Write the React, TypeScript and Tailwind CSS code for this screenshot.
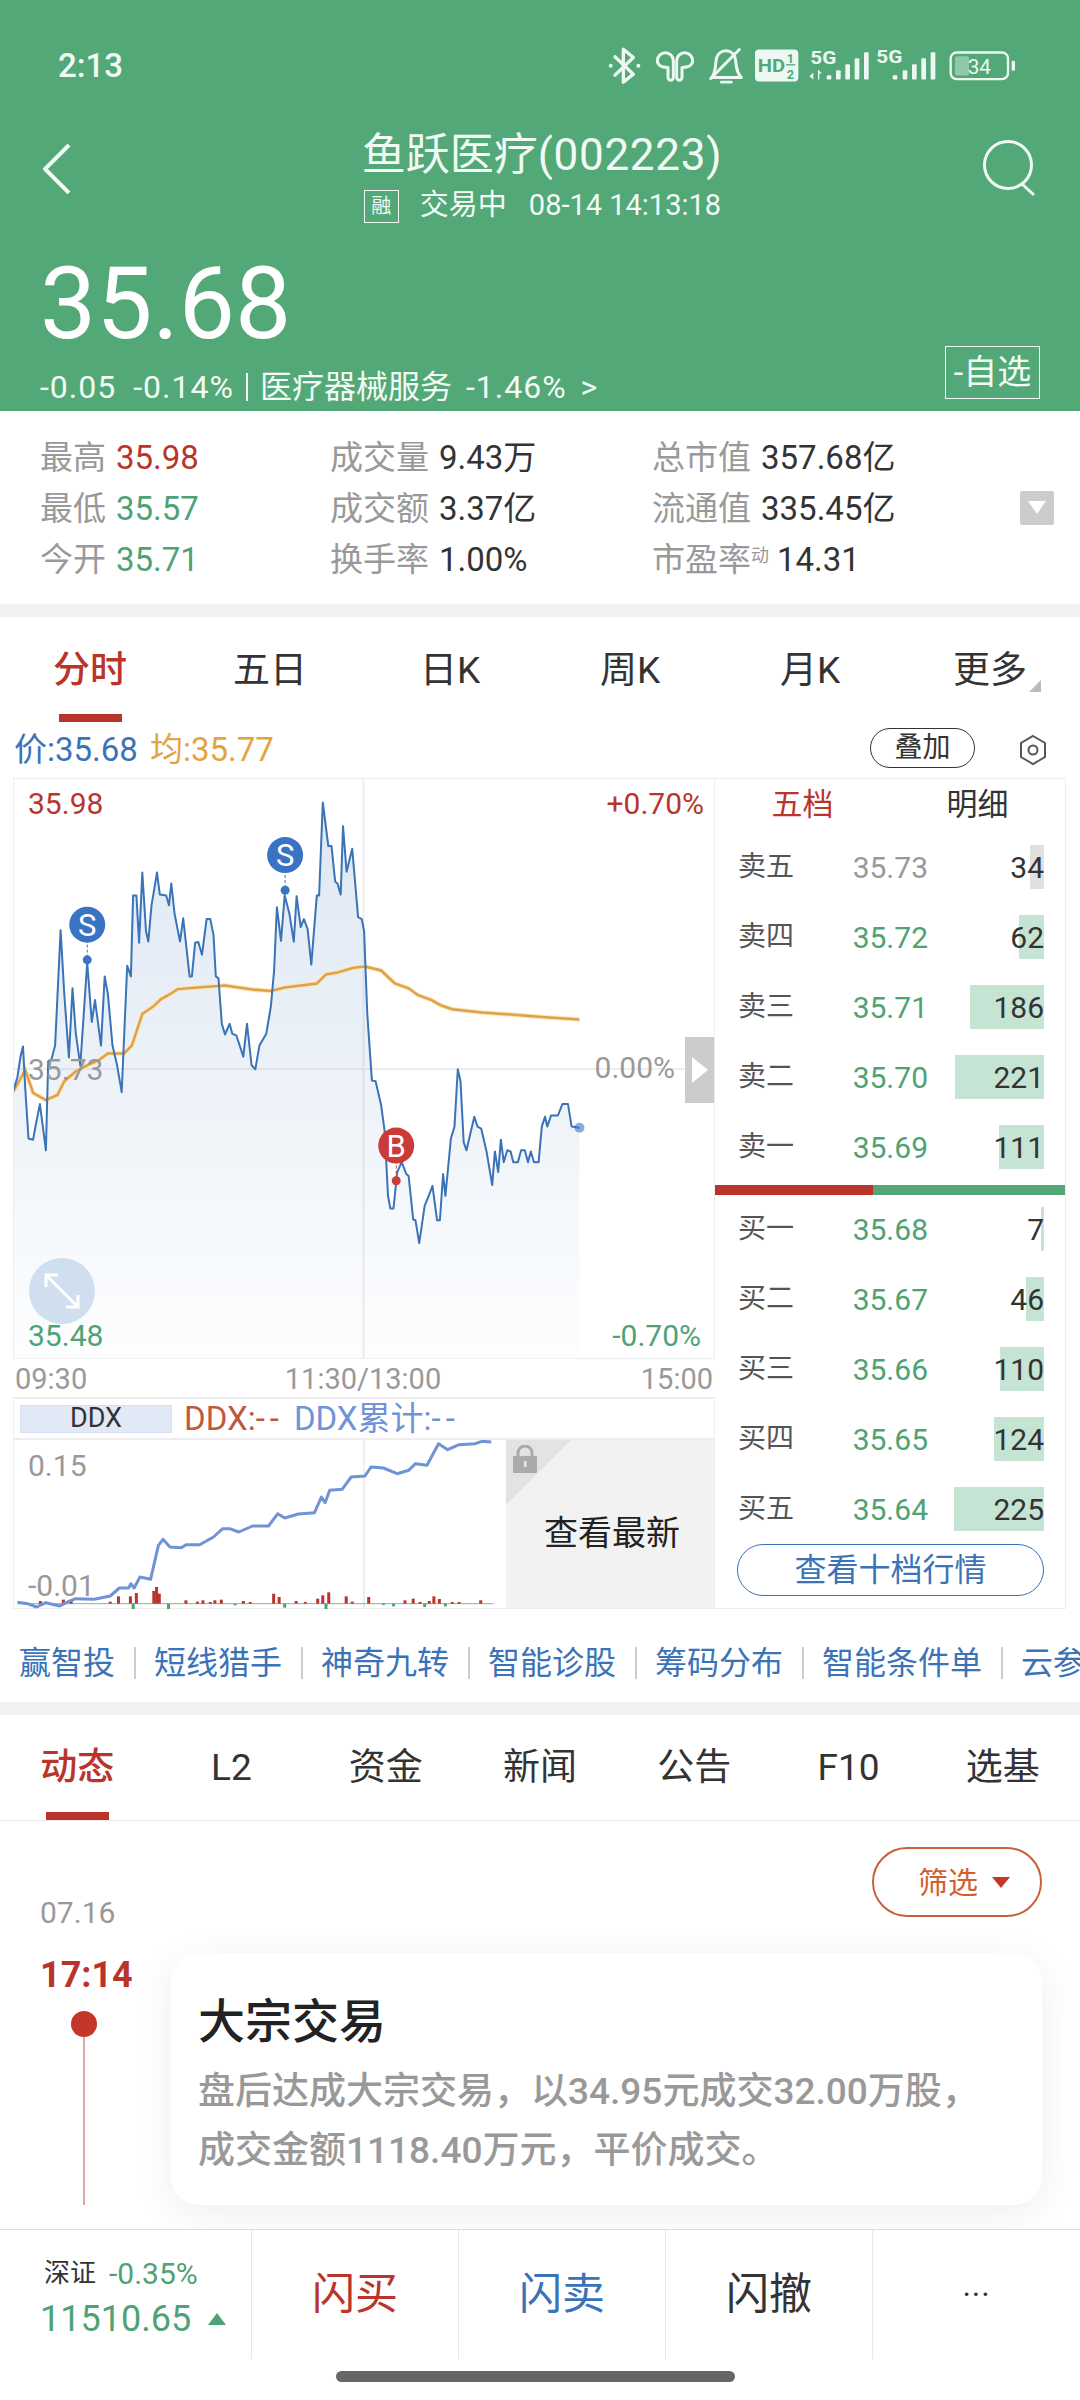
import React from 'react';

const GREEN = 'text-[#4fa274]';

// traced from the chart, in crop coordinates (sx, sy below bring them to pixels)
const pricePts = [[28,838],[38,800],[45,745],[50,722],[55,830],[62,955],[72,958],[78,920],[87,868],[100,985],[105,760],[112,755],[120,720],[132,428],[140,590],[150,750],[158,575],[165,690],[175,770],[190,510],[200,660],[207,605],[220,720],[228,545],[235,590],[245,720],[255,770],[265,838],[277,518],[285,545],[290,340],[297,340],[303,460],[310,282],[318,430],[323,457],[330,365],[342,282],[348,338],[362,340],[368,365],[373,310],[380,385],[392,457],[399,398],[413,545],[418,545],[425,460],[432,458],[440,490],[450,400],[458,400],[465,440],[470,545],[476,550],[483,665],[490,692],[500,665],[506,690],[515,695],[530,748],[538,665],[548,770],[556,780],[565,720],[580,690],[590,620],[597,530],[603,370],[612,455],[620,340],[630,385],[640,457],[646,342],[655,420],[662,400],[670,425],[678,515],[690,340],[695,340],[703,105],[715,215],[722,215],[730,305],[735,310],[742,338],[747,165],[755,280],[767,222],[780,395],[788,400],[793,430],[800,640],[810,808],[818,810],[830,870],[838,940],[845,1100],[850,1132],[857,1132],[865,1040],[875,1015],[885,1045],[890,1050],[900,1160],[905,1162],[913,1220],[925,1125],[932,1105],[942,1075],[952,1162],[958,1162],[965,1045],[970,1100],[982,955],[990,925],[997,780],[1003,810],[1010,965],[1016,985],[1033,900],[1040,925],[1048,930],[1060,990],[1072,1073],[1078,988],[1085,1040],[1091,958],[1097,1015],[1105,985],[1112,988],[1118,1015],[1128,1015],[1135,985],[1143,985],[1150,1015],[1156,988],[1163,1015],[1173,1015],[1180,925],[1187,900],[1192,925],[1200,897],[1215,897],[1225,868],[1237,868],[1245,925],[1262,928]];
const avgPts = [[28,838],[55,782],[72,840],[100,858],[125,845],[140,810],[165,785],[190,770],[215,757],[235,740],[270,740],[287,720],[310,640],[335,620],[350,603],[370,590],[387,577],[430,573],[490,568],[550,578],[590,582],[620,573],[690,563],[710,540],[735,535],[770,523],[795,520],[830,530],[860,563],[890,575],[910,592],[940,605],[960,618],[985,628],[1050,636],[1120,642],[1180,648],[1262,654]];
const ddxPts = [[38,661],[60,665],[80,675],[100,662],[130,672],[150,658],[165,650],[205,652],[240,642],[260,618],[280,618],[285,605],[292,618],[305,585],[328,592],[345,490],[355,472],[370,495],[395,497],[405,488],[435,488],[465,465],[485,440],[500,440],[520,450],[550,432],[585,432],[605,395],[620,408],[650,396],[685,392],[700,345],[708,362],[718,325],[745,322],[765,285],[795,282],[808,255],[835,258],[865,275],[890,265],[905,245],[930,250],[955,185],[975,203],[1000,188],[1035,185],[1050,178],[1070,180]];
const redBars = [[88,8],[138,12],[155,10],[240,6],[258,22],[284,22],[297,32],[335,38],[341,50],[347,30],[405,10],[430,6],[442,10],[458,5],[468,10],[482,12],[530,8],[545,5],[596,30],[608,20],[645,8],[665,5],[692,15],[703,25],[716,34],[754,22],[767,6],[803,20],[882,10],[900,15],[915,5],[935,8],[945,22],[957,14],[985,5],[1000,5],[1047,10]];
const greenBars = [[290,20],[367,20],[512,5],[620,12],[710,20],[835,4],[857,8],[925,10],[970,8]];

const sx = (x: number) => x / 2.178 - 14;
const sy = (y: number) => y / 2.53 - 18;
const line = (pts: number[][]) => pts.map(([x, y]) => `${sx(x).toFixed(1)},${sy(y).toFixed(1)}`).join(' ');
const ddxY = (y: number) => y / 3 - 58;
const ddxLine = ddxPts.map(([x, y]) => `${sx(x).toFixed(1)},${ddxY(y).toFixed(1)}`).join(' ');

const stats = [
  [['最高', '35.98', 'text-[#b9352c]'], ['成交量', '9.43万', ''], ['总市值', '357.68亿', '']],
  [['最低', '35.57', GREEN], ['成交额', '3.37亿', ''], ['流通值', '335.45亿', '']],
  [['今开', '35.71', GREEN], ['换手率', '1.00%', ''], ['市盈率', '14.31', '']],
];

const sells = [
  ['卖五', '35.73', '34', 14, 'gray'],
  ['卖四', '35.72', '62', 25, 'green'],
  ['卖三', '35.71', '186', 74, 'green'],
  ['卖二', '35.70', '221', 89, 'green'],
  ['卖一', '35.69', '111', 45, 'green'],
] as const;
const buys = [
  ['买一', '35.68', '7', 3, 'green'],
  ['买二', '35.67', '46', 18, 'green'],
  ['买三', '35.66', '110', 44, 'green'],
  ['买四', '35.65', '124', 50, 'green'],
  ['买五', '35.64', '225', 90, 'green'],
] as const;

function BookRow({ row }: { row: readonly [string, string, string, number, string] }) {
  const [label, price, qty, w, tone] = row;
  return (
    <div className="flex h-[44px] items-center pl-[23px] pr-[21px]">
      <span className="w-[101px] text-[28px] text-[#555]">{label}</span>
      <span className={`w-[89px] text-right text-[30px] ${tone === 'gray' ? 'text-[#999]' : GREEN}`}>{price}</span>
      <div className="relative flex h-full flex-1 items-center justify-end">
        <div
          className={`absolute inset-y-0 right-0 ${tone === 'gray' ? 'bg-[#e0e0e0]' : 'bg-[#c5e4d3]'}`}
          style={{ width: w }}
        />
        <span className="relative text-[30px] text-[#333]">{qty}</span>
      </div>
    </div>
  );
}

function StatusIcons() {
  return (
    <svg width="480" height="57" viewBox="0 60 1440 170" fill="none" stroke="#eef8f2" strokeLinecap="round" strokeLinejoin="round">
      <path d="M105 110 L160 162 L130 186 L130 87 L160 112 L105 165" strokeWidth="10" />
      <circle cx="92" cy="137" r="6" fill="#eef8f2" stroke="none" />
      <circle cx="175" cy="137" r="6" fill="#eef8f2" stroke="none" />
      <path d="M232 122 a24 24 0 0 1 48 0 v50 a8 8 0 0 1 -16 0 v-30 c-15 0 -32 -5 -32 -20" strokeWidth="9" />
      <path d="M338 122 a24 24 0 0 0 -48 0 v50 a8 8 0 0 0 16 0 v-30 c15 0 32 -5 32 -20" strokeWidth="9" />
      <path d="M396 172 h88 c-13 -13 -15 -30 -17 -50 c-2 -20 -14 -30 -29 -30 c-15 0 -28 10 -30 30 c-2 20 -2 35 -12 50" strokeWidth="9" />
      <path d="M392 175 L478 88" strokeWidth="9" />
      <path d="M424 186 h30" strokeWidth="8" />
      <rect x="525" y="88" width="130" height="96" rx="12" fill="#eef8f2" stroke="none" />
      <g fill="#53a878" stroke="none" fontFamily="Roboto, sans-serif" fontWeight="700">
        <text x="533" y="155" fontSize="54" textLength="82" lengthAdjust="spacingAndGlyphs">HD</text>
        <text x="620" y="128" fontSize="38">1</text>
        <text x="620" y="178" fontSize="38">2</text>
        <rect x="618" y="132" width="28" height="4" />
      </g>
      <g fill="#eef8f2" stroke="none" fontFamily="Roboto, sans-serif" fontWeight="700">
        <text x="691" y="132" fontSize="56" textLength="78" lengthAdjust="spacingAndGlyphs">5G</text>
        <text x="889" y="130" fontSize="56" textLength="78" lengthAdjust="spacingAndGlyphs">5G</text>
        <path d="M688 168 l12 -10 v20 z M714 148 l12 12 h-8 v18 h-4 z" />
        <rect x="740" y="165" width="14" height="13" rx="3" />
        <rect x="768" y="150" width="14" height="28" rx="3" />
        <rect x="796" y="132" width="14" height="46" rx="3" />
        <rect x="824" y="114" width="14" height="64" rx="3" />
        <rect x="852" y="96" width="14" height="82" rx="3" />
        <rect x="938" y="165" width="14" height="13" rx="3" />
        <rect x="968" y="150" width="14" height="28" rx="3" />
        <rect x="996" y="132" width="14" height="46" rx="3" />
        <rect x="1024" y="114" width="14" height="64" rx="3" />
        <rect x="1052" y="96" width="14" height="82" rx="3" />
      </g>
      <rect x="1112" y="97" width="172" height="80" rx="18" strokeWidth="7" />
      <rect x="1125" y="108" width="42" height="58" rx="6" fill="#eef8f2" fillOpacity="0.4" stroke="none" />
      <text x="1198" y="161" textAnchor="middle" fontSize="62" fill="#eef8f2" stroke="none" fontFamily="Roboto, sans-serif">34</text>
      <rect x="1295" y="122" width="10" height="30" rx="4" fill="#eef8f2" stroke="none" />
    </svg>
  );
}

function PriceChart() {
  const fillPts = `${line(pricePts)} ${sx(1262).toFixed(1)},${sy(1515).toFixed(1)} ${sx(28).toFixed(1)},${sy(1515).toFixed(1)}`;
  return (
    <div className="relative h-[581px] border border-[#eeeeee]">
      <svg className="absolute left-0 top-0" width="700" height="579" fill="none">
        <defs>
          <linearGradient id="area" x1="0" y1="0" x2="0" y2="1">
            <stop offset="0" stopColor="#3a73b8" stopOpacity="0.17" />
            <stop offset="1" stopColor="#3a73b8" stopOpacity="0.01" />
          </linearGradient>
        </defs>
        <path d="M0 290 H700" stroke="#dddddd" strokeWidth="1" />
        <path d="M349.5 0 V579" stroke="#eeeeee" strokeWidth="2" />
        <polygon points={fillPts} fill="url(#area)" />
        <polyline points={line(avgPts)} stroke="#fbe6b8" strokeWidth="4.5" />
        <polyline points={line(avgPts)} stroke="#dfa24a" strokeWidth="2.5" />
        <polyline points={line(pricePts)} stroke="#3a73b8" strokeWidth="2" strokeLinejoin="round" />
        <circle cx={sx(1262)} cy={sy(928)} r="5" fill="#3a73c4" fillOpacity="0.6" />
        {[
          { x: 190, y: 414, d: 503, c: '#3a73c4', t: 'S' },
          { x: 621, y: 238, d: 327, c: '#3a73c4', t: 'S' },
          { x: 863, y: 973, d: 1062, c: '#cb3a36', t: 'B' },
        ].map(m => (
          <g key={m.x}>
            <path d={`M${sx(m.x)} ${sy(m.y)} V${sy(m.d)}`} stroke={m.c} strokeWidth="1" strokeDasharray="3 2" />
            <circle cx={sx(m.x)} cy={sy(m.d)} r="4.5" fill={m.c} />
            <circle cx={sx(m.x)} cy={sy(m.y)} r="18" fill={m.c} />
            <text x={sx(m.x)} y={sy(m.y) + 11} textAnchor="middle" fontSize="31" fill="#fff" fontFamily="Roboto, sans-serif">{m.t}</text>
          </g>
        ))}
      </svg>
      <span className="absolute left-[14px] top-[7px] text-[30px] leading-[36px] text-[#b9352c]">35.98</span>
      <span className="absolute right-[10px] top-[7px] text-[30px] leading-[36px] text-[#b9352c]">+0.70%</span>
      <span className="absolute left-[14px] top-[273px] text-[30px] leading-[36px] text-[#999]">35.73</span>
      <span className="absolute right-[39px] top-[271px] text-[30px] leading-[36px] text-[#999]">0.00%</span>
      <span className="absolute left-[14px] bottom-[4px] text-[30px] leading-[36px] text-[#4fa274]">35.48</span>
      <span className="absolute right-[13px] bottom-[4px] text-[30px] leading-[36px] text-[#4fa274]">-0.70%</span>
      <div className="absolute right-0 top-[258px] flex h-[66px] w-[29px] items-center justify-center bg-[#cccccc]">
        <div className="h-0 w-0 border-y-[13px] border-l-[16px] border-y-transparent border-l-white" />
      </div>
      <div className="absolute left-[15px] top-[479px] flex h-[66px] w-[66px] items-center justify-center rounded-full bg-[#cfdff0]">
        <svg width="40" height="40" viewBox="0 0 40 40" fill="none" stroke="#fff" strokeWidth="3">
          <path d="M4 16 V4 H16 M4 4 L36 36 M24 36 H36 V24" />
        </svg>
      </div>
    </div>
  );
}

function DdxChart() {
  return (
    <div className="flex h-[171px] border-x border-b border-t-2 border-[#eeeeee]">
      <div className="relative w-[492px]">
        <svg className="absolute left-0 top-0" width="492" height="169" fill="none">
          <path d="M350 0 V169" stroke="#eeeeee" strokeWidth="2" />
          <path d={`M${sx(38)} ${ddxY(665)} H${sx(1075)}`} stroke="#7dbb98" strokeWidth="1" />
          {redBars.map(([x, h]) => (
            <rect key={x} x={sx(x) - 1.5} y={ddxY(665) - h / 3} width="3" height={h / 3} fill="#b9352c" />
          ))}
          {greenBars.map(([x, h]) => (
            <rect key={x} x={sx(x) - 1.5} y={ddxY(665)} width="3" height={h / 3} fill="#4fa274" />
          ))}
          <polyline points={ddxLine} stroke="#6f93d6" strokeWidth="3" strokeLinejoin="round" />
        </svg>
        <span className="absolute left-[14px] top-[8px] text-[30px] leading-[36px] text-[#999]">0.15</span>
        <span className="absolute left-[14px] top-[128px] text-[30px] leading-[36px] text-[#999]">-0.01</span>
      </div>
      <div className="relative flex flex-1 items-center justify-center bg-[#f2f2f2] pl-[4px] pt-[18px]">
        <div className="absolute left-0 top-0 h-[65px] w-[65px] bg-[#e3e3e3] [clip-path:polygon(0_0,100%_0,0_100%)]" />
        <svg className="absolute left-[6px] top-[5px]" width="26" height="28" viewBox="0 0 26 28">
          <path d="M6 12 V8 a7 7 0 0 1 14 0 v4" fill="none" stroke="#aaaaaa" strokeWidth="3" />
          <rect x="1" y="11" width="24" height="17" rx="1" fill="#aaaaaa" />
          <rect x="12" y="16" width="2.5" height="6" fill="#e8e8e8" />
        </svg>
        <span className="relative text-[34px] text-[#222]">查看最新</span>
      </div>
    </div>
  );
}

export default function App() {
  return (
    <div className="h-[2400px] w-[1080px] overflow-hidden bg-white font-['Roboto','Noto_Sans_CJK_SC',sans-serif] text-[#333]">
      {/* green quote header */}
      <header className="h-[411px] bg-[#53a878] text-[#f2faf5]">
        <div className="flex h-[97px] items-end justify-between">
          <span className="mb-[11px] ml-[58px] text-[33px] font-medium leading-[40px]">2:13</span>
          <div className="mr-[20px]"><StatusIcons /></div>
        </div>
        <div className="mt-[30px] grid h-[100px] grid-cols-[1fr_auto_1fr]">
          <div className="pl-[43px] pt-[17px]">
            <svg width="28" height="50" viewBox="0 0 28 50" fill="none" stroke="#f2faf5" strokeWidth="4">
              <path d="M26 1 L2 25 L26 49" />
            </svg>
          </div>
          <div className="flex flex-col items-start pl-[4px]">
            <div className="text-[44px] leading-[56px]">鱼跃医疗<span className="tracking-[0.7px]">(002223)</span></div>
            <div className="ml-[2px] mt-[6px] flex h-[34px] items-center">
              <span className="flex h-[33px] w-[35px] items-center justify-center border border-[#f2faf5] text-[20px]">融</span>
              <span className="ml-[21px] text-[29px]">交易中</span>
              <span className="ml-[22px] text-[29px]">08-14 14:13:18</span>
            </div>
          </div>
          <div className="flex justify-end pr-[44px] pt-[12px]">
            <svg width="54" height="58" viewBox="0 0 54 58" fill="none" stroke="#f2faf5" strokeWidth="3">
              <circle cx="26" cy="26" r="23.5" />
              <path d="M40 45 L52 56" />
            </svg>
          </div>
        </div>
        <div className="flex items-end justify-between pl-[40px] pr-[40px]">
          <div>
            <div className="pt-[27px] text-[100px] leading-[100px] text-white">35.68</div>
            <div className="mt-[15px] flex h-[36px] items-center text-[32px] leading-[36px]">
              <span className="tracking-[1px]">-0.05</span>
              <span className="ml-[17px] tracking-[1px]">-0.14%</span>
              <span className="ml-[12px] h-[28px] w-[2px] bg-[#f2faf5]" />
              <span className="ml-[12px]">医疗器械服务</span>
              <span className="ml-[14px] tracking-[1px]">-1.46%</span>
              <span className="ml-[14px]">&gt;</span>
            </div>
          </div>
          <div className="mb-[6px] flex h-[53px] w-[95px] items-center justify-center border border-[#f2faf5] text-[34px]">-自选</div>
        </div>
      </header>

      {/* stats */}
      <section className="flex h-[193px] items-center pl-[40px]">
        <div className="flex-1 pt-[3px]">
          {stats.map((row, i) => (
            <div key={i} className="grid h-[51px] grid-cols-[290px_322px_1fr] items-center text-[33px]">
              {row.map(([label, val, tone]) => (
                <div key={label} className="whitespace-nowrap">
                  <span className="text-[#999]">{label}</span>
                  {label === '市盈率' && <sup className="text-[18px] text-[#999]">动</sup>}
                  <span className={`${label === '市盈率' ? 'ml-[8px]' : 'ml-[10px]'} ${tone || 'text-[#333]'}`}>{val}</span>
                </div>
              ))}
            </div>
          ))}
        </div>
        <div className="mr-[26px] flex h-[34px] w-[34px] items-center justify-center rounded-[2px] bg-[#cccccc]">
          <div className="h-0 w-0 border-x-[9px] border-t-[13px] border-x-transparent border-t-white" />
        </div>
      </section>
      <div className="h-[13px] bg-[#f2f2f2]" />

      {/* chart tabs */}
      <nav className="grid h-[105px] grid-cols-6 text-[37px]">
        {['分时', '五日', '日K', '周K', '月K', '更多'].map((t, i) => (
          <div key={t} className="flex flex-col items-center pt-[29px]">
            <div className={`relative leading-[50px] ${i === 0 ? 'font-medium text-[#b9352c]' : 'text-[#333]'}`}>
              {t}
              {i === 5 && <div className="absolute bottom-[4px] right-[-14px] h-[12px] w-[12px] bg-[#bbbbbb] [clip-path:polygon(100%_0,100%_100%,0_100%)]" />}
            </div>
            {i === 0 && <div className="mt-[18px] h-[8px] w-[63px] bg-[#b9352c]" />}
          </div>
        ))}
      </nav>
      <div className="flex h-[56px] items-center pl-[14px] pr-[32px] text-[33px]">
        <span className="text-[#3a73b8]">价:35.68</span>
        <span className="ml-[12px] text-[#e3a440]">均:35.77</span>
        <span className="mb-[4px] ml-auto flex h-[40px] w-[105px] items-center justify-center rounded-full border border-[#333] text-[28px]">叠加</span>
        <svg className="ml-[43px]" width="30" height="32" viewBox="0 0 30 32" fill="none" stroke="#555" strokeWidth="2">
          <path d="M15 2 L27 9 V23 L15 30 L3 23 V9 Z" />
          <circle cx="15" cy="16" r="4.5" />
        </svg>
      </div>

      {/* chart and order book */}
      <section className="ml-[13px] mr-[14px] flex h-[831px]">
        <div className="w-[702px]">
          <PriceChart />
          <div className="flex h-[38px] items-center justify-between px-[2px] pt-[3px] text-[29px] text-[#999]">
            <span>09:30</span>
            <span className="ml-[-2px]">11:30/13:00</span>
            <span>15:00</span>
          </div>
          <div className="flex h-[41px] items-center border-x border-t-2 border-[#eeeeee] pl-[6px] text-[33px]">
            <span className="flex h-[28px] w-[152px] items-center justify-center border border-[#d5e0f4] bg-[#e2e9f6] text-[27px] text-[#333]">DDX</span>
            <span className="ml-[12px] text-[#c0583f]">DDX:<span className="tracking-[5px]">--</span></span>
            <span className="ml-[10px] text-[#6f93d6]">DDX累计:<span className="tracking-[5px]">--</span></span>
          </div>
          <DdxChart />
        </div>
        <div className="flex-1 border-x border-y border-[#eeeeee] border-l-0">
          <div className="grid h-[52px] grid-cols-2 items-center text-center text-[31px]">
            <span className="text-[#b9352c]">五档</span>
            <span className="text-[#333]">明细</span>
          </div>
          <div className="mt-[14px] flex flex-col gap-[26px]">
            {sells.map(r => <BookRow key={r[0]} row={r} />)}
          </div>
          <div className="mt-[16px] flex h-[10px]">
            <div className="w-[158px] bg-[#b9352c]" />
            <div className="flex-1 bg-[#53a878]" />
          </div>
          <div className="mt-[12px] flex flex-col gap-[26px]">
            {buys.map(r => <BookRow key={r[0]} row={r} />)}
          </div>
          <div className="ml-[22px] mr-[21px] mt-[13px] flex h-[52px] items-center justify-center rounded-full border border-[#3a73b8] text-[32px] text-[#3a73b8]">
            查看十档行情
          </div>
        </div>
      </section>

      {/* shortcut links */}
      <div className="flex h-[93px] items-start overflow-hidden pl-[19px] pt-[38px] text-[32px] leading-[32px] text-[#3a73b8]">
        {['赢智投', '短线猎手', '神奇九转', '智能诊股', '筹码分布', '智能条件单', '云参'].map((t, i) => (
          <React.Fragment key={t}>
            {i > 0 && <span className="mx-[18.5px] h-[32px] w-[2px] shrink-0 bg-[#cccccc]" />}
            <span className="shrink-0 whitespace-nowrap">{t}</span>
          </React.Fragment>
        ))}
      </div>
      <div className="h-[13px] bg-[#f2f2f2]" />

      {/* news tabs */}
      <nav className="grid h-[106px] grid-cols-7 border-b border-[#e8e8e8] text-[37px]">
        {['动态', 'L2', '资金', '新闻', '公告', 'F10', '选基'].map((t, i) => (
          <div key={t} className="flex flex-col items-center pt-[28px]">
            <span className={`leading-[50px] ${i === 0 ? 'font-medium text-[#b9352c]' : 'text-[#333]'}`}>{t}</span>
            {i === 0 && <div className="mt-[19px] h-[8px] w-[63px] bg-[#b9352c]" />}
          </div>
        ))}
      </nav>

      {/* timeline */}
      <section className="flex h-[408px] overflow-hidden pr-[38px]">
        <div className="w-[171px] shrink-0 pl-[40px] pt-[72px]">
          <div className="text-[30px] leading-[40px] text-[#999]">07.16</div>
          <div className="mt-[20px] text-[36px] font-bold leading-[44px] text-[#b9352c]">17:14</div>
          <div className="ml-[31px] mt-[14px] h-[26px] w-[26px] rounded-full bg-[#c4352c]" />
          <div className="ml-[43px] h-[168px] w-[2px] bg-[#e0a8a4]" />
        </div>
        <div className="flex flex-1 flex-col items-end pt-[26px]">
          <div className="flex h-[70px] w-[170px] items-center justify-center gap-[14px] rounded-[35px] border-2 border-[#c9603a] pl-[14px] text-[30px] text-[#d0602e]">
            筛选
            <div className="h-0 w-0 border-x-[9px] border-t-[11px] border-x-transparent border-t-[#c4352c]" />
          </div>
          <article className="mt-[36px] h-[252px] w-full rounded-[28px] bg-white pl-[27px] pt-[41px] shadow-[0_8px_40px_rgba(0,0,0,0.07)]">
            <h3 className="text-[47px] font-medium leading-[56px] text-[#222]">大宗交易</h3>
            <p className="mt-[12px] whitespace-nowrap text-[37px] font-medium leading-[59px] text-[#999]">
              盘后达成大宗交易，以34.95元成交32.00万股，<br />
              成交金额1118.40万元，平价成交。
            </p>
          </article>
        </div>
      </section>

      {/* bottom action bar */}
      <footer className="grid h-[130px] grid-cols-[252px_207px_207px_207px_207px] border-t border-[#dddddd]">
        <div className="border-r border-[#e8e8e8] pl-[40px] pt-[24px]">
          <div className="flex h-[38px] items-center pl-[4px]">
            <span className="text-[26px] text-[#333]">深证</span>
            <span className="ml-[13px] text-[30px] text-[#4fa274]">-0.35%</span>
          </div>
          <div className="mt-[4px] flex items-center">
            <span className="text-[36px] leading-[46px] text-[#4fa274]">11510.65</span>
            <div className="ml-[17px] h-0 w-0 border-x-[9px] border-b-[12px] border-x-transparent border-b-[#4fa274]" />
          </div>
        </div>
        <div className="flex items-center justify-center border-r border-[#e8e8e8] text-[43px] text-[#b9352c]">闪买</div>
        <div className="flex items-center justify-center border-r border-[#e8e8e8] text-[43px] text-[#3a73b8]">闪卖</div>
        <div className="flex items-center justify-center border-r border-[#e8e8e8] text-[43px] text-[#333]">闪撤</div>
        <div className="flex items-center justify-center text-[32px] tracking-[1px] text-[#333]">···</div>
      </footer>
      <div className="ml-[336px] mt-[12px] h-[11px] w-[399px] rounded-full bg-[#666666]" />
    </div>
  );
}
